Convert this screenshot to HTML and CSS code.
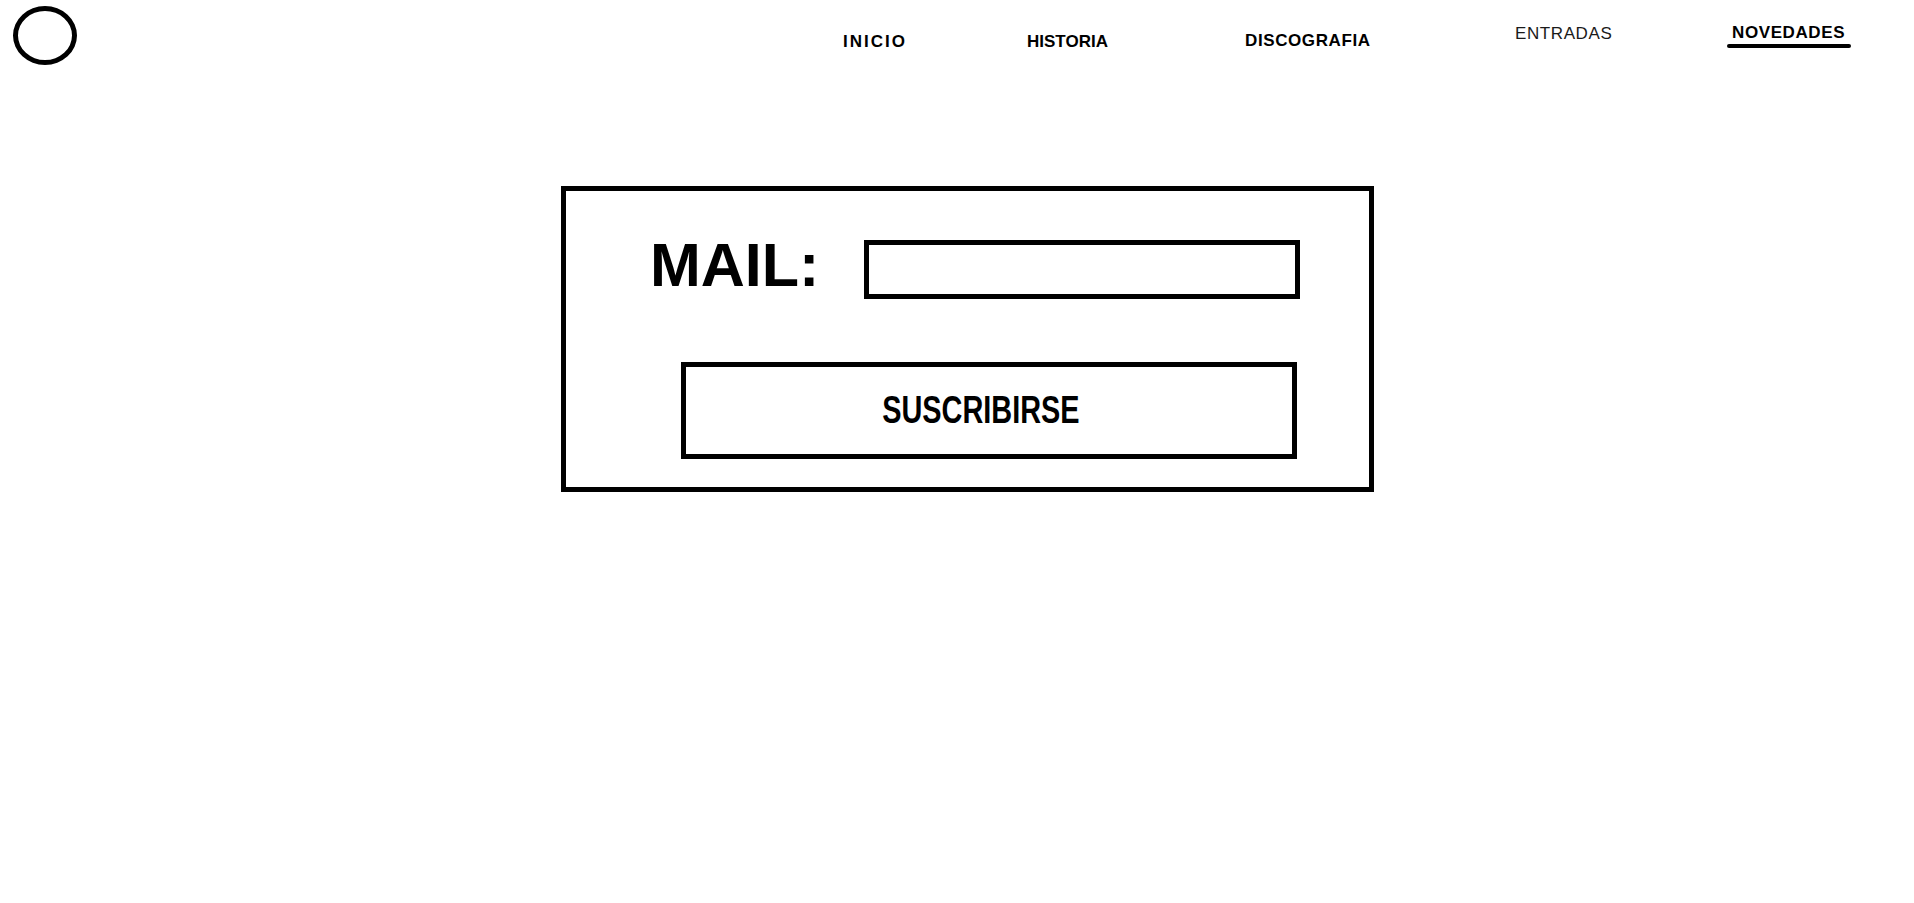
FILE: index.html
```html
<!DOCTYPE html>
<html lang="es">
<head>
  <meta charset="UTF-8">
  <title>Novedades - Suscripción</title>
  <link rel="stylesheet" href="styles.css">
</head>
<body>
  <header class="header">
    <div class="logo"></div>
    <nav class="nav">
      <a class="nav-item nav-item--low nav-item--wide" href="#">INICIO</a>
      <a class="nav-item nav-item--low nav-item--tight" href="#">HISTORIA</a>
      <a class="nav-item nav-item--mid" href="#">DISCOGRAFIA</a>
      <a class="nav-item nav-item--high nav-item--light" href="#">ENTRADAS</a>
      <a class="nav-item nav-item--top nav-item--active" href="#">NOVEDADES</a>
    </nav>
  </header>

  <main class="main">
    <!-- formulario de suscripción -->
    <form class="subscribe" onsubmit="return false">
      <div class="subscribe-row">
        <label class="subscribe-label" for="mail">MAIL:</label>
        <input class="subscribe-input" type="email" id="mail" name="mail">
      </div>
      <button class="subscribe-button" type="submit"><span class="subscribe-text">SUSCRIBIRSE</span></button>
    </form>
  </main>
</body>
</html>
```

FILE: styles.css
```css
body {
  margin: 0;
  background: #fff;
  color: #000;
  font-family: "Liberation Sans", Arial, sans-serif;
}
.header {
  display: flex;
  align-items: flex-start;
  height: 65px;
  padding: 6px 0 0 13px;
  box-sizing: border-box;
}
.logo {
  width: 64px;
  height: 59px;
  border: 5px solid #000;
  border-radius: 50%;
  box-sizing: border-box;
}
.nav {
  display: grid;
  grid-template-columns: 184px 218px 270px 212px auto;
  align-items: start;
  margin-left: 766px;
}
.nav-item {
  display: block;
  width: fit-content;
  font-size: 17px;
  line-height: 20px;
  font-weight: bold;
  letter-spacing: 0.6px;
  color: #000;
  text-decoration: none;
}
.nav-item--wide {
  letter-spacing: 2px;
}
.nav-item--tight {
  letter-spacing: 0;
}
.nav-item--low {
  margin-top: 26px;
}
.nav-item--mid {
  margin-top: 25px;
}
.nav-item--high {
  margin-top: 18px;
}
.nav-item--top {
  margin-top: 17px;
}
.nav-item--light {
  font-weight: normal;
  color: #1a1a1a;
}
.nav-item--active {
  padding: 0 6px 1px 5px;
}
.nav-item--active::after {
  content: "";
  display: block;
  height: 4px;
  margin: 1px -6px 0 -5px;
  border-radius: 2px;
  background: #000;
}
.main {
  padding-top: 121px;
}
.subscribe {
  width: 813px;
  margin-left: 561px;
  padding: 49px 69px 28px 84px;
  border: 5px solid #000;
  box-sizing: border-box;
}
.subscribe-row {
  display: flex;
  align-items: flex-start;
  justify-content: space-between;
}
.subscribe-label {
  margin-top: -5px;
  font-size: 61px;
  line-height: 61px;
  font-weight: bold;
}
.subscribe-input {
  width: 436px;
  height: 59px;
  padding: 0 10px;
  border: 5px solid #000;
  border-radius: 0;
  box-sizing: border-box;
  background: #fff;
  font-size: 20px;
  outline: none;
}
.subscribe-button {
  display: block;
  width: calc(100% - 34px);
  height: 97px;
  margin: 63px 3px 0 31px;
  padding: 0 16px 0 0;
  border: 5px solid #000;
  border-radius: 0;
  box-sizing: border-box;
  background: #fff;
  color: #000;
  font-family: "Liberation Sans", Arial, sans-serif;
  font-size: 38px;
  font-weight: bold;
  cursor: pointer;
}
.subscribe-text {
  display: inline-block;
  transform: scaleX(0.76);
}
```
